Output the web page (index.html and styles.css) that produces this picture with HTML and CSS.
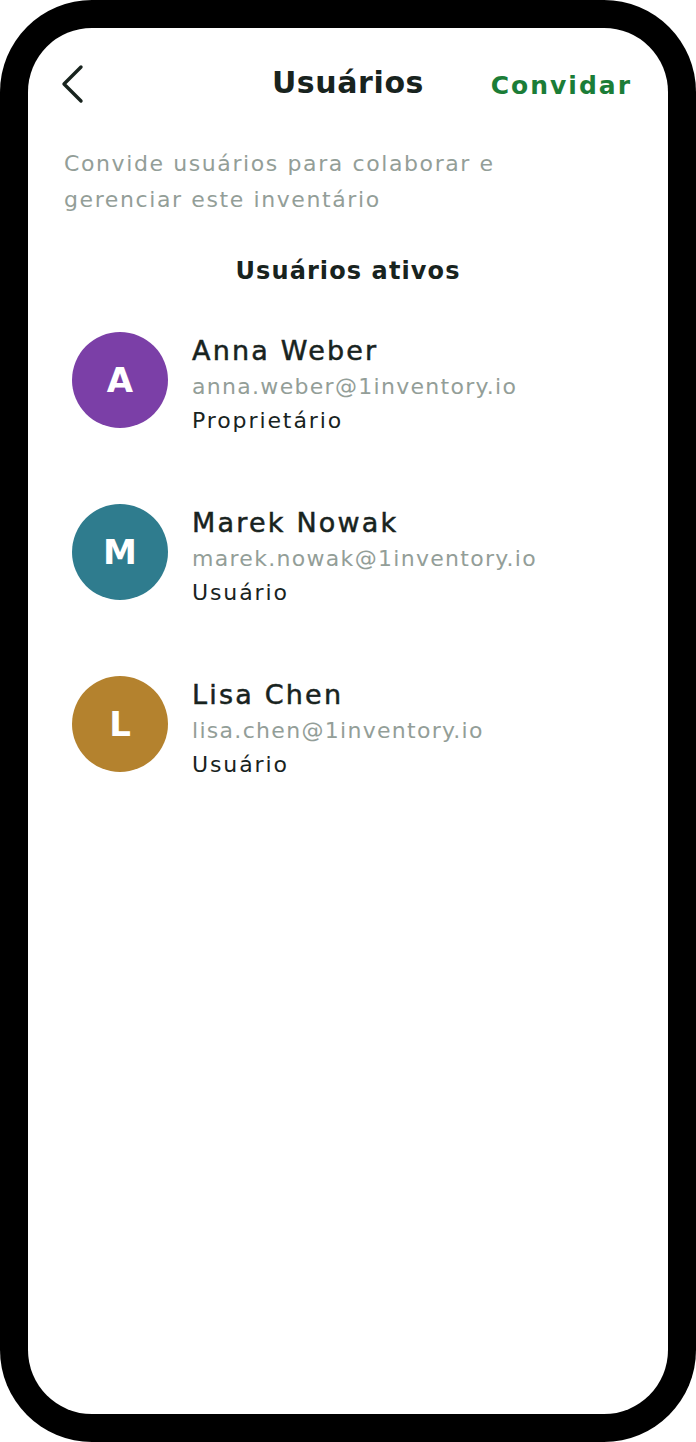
FILE: index.html
```html
<!DOCTYPE html>
<html lang="pt-BR">
<head>
<meta charset="utf-8">
<title>Usuários</title>
<link rel="stylesheet" href="styles.css">
</head>
<body>
<div class="phone">
  <div class="screen">
    <header class="topbar">
      <button class="back" aria-label="Voltar">
        <svg width="24" height="40" viewBox="0 0 24 40"><path d="M20 3 L3 20 L20 37" fill="none" stroke="#18231e" stroke-width="3.4" stroke-linecap="round" stroke-linejoin="round"/></svg>
      </button>
      <h1 class="title">Usuários</h1>
      <a class="invite">Convidar</a>
    </header>
    <p class="intro">Convide usuários para colaborar e gerenciar este inventário</p>
    <h2 class="section">Usuários ativos</h2>
    <ul class="users">
      <li class="user">
        <div class="avatar purple">A</div>
        <div class="info">
          <div class="name">Anna Weber</div>
          <div class="email">anna.weber@1inventory.io</div>
          <div class="role">Proprietário</div>
        </div>
      </li>
      <li class="user">
        <div class="avatar teal">M</div>
        <div class="info">
          <div class="name">Marek Nowak</div>
          <div class="email">marek.nowak@1inventory.io</div>
          <div class="role">Usuário</div>
        </div>
      </li>
      <li class="user">
        <div class="avatar gold">L</div>
        <div class="info">
          <div class="name">Lisa Chen</div>
          <div class="email">lisa.chen@1inventory.io</div>
          <div class="role">Usuário</div>
        </div>
      </li>
    </ul>
  </div>
</div>
</body>
</html>
```
FILE: styles.css
```css
* { box-sizing: border-box; }
html, body { margin: 0; padding: 0; background: #fff; }
body { font-family: "DejaVu Sans", "Open Sans", sans-serif; color: #18231e; }

.phone {
  width: 696px;
  height: 1442px;
  background: #000;
  border-radius: 92px;
  padding: 28px;
}
.screen {
  height: 100%;
  background: #fff;
  border-radius: 64px;
  padding: 36px 36px 0 36px;
}

.topbar {
  position: relative;
  display: flex;
  align-items: center;
  justify-content: space-between;
  height: 40px;
}
.back {
  border: 0;
  background: none;
  padding: 0;
  margin-left: -3px;
  width: 24px;
  height: 40px;
  display: flex;
}
.title {
  position: absolute;
  left: 0; right: 0;
  top: -1px;
  margin: 0;
  text-align: center;
  font-size: 30px;
  line-height: 40px;
  font-weight: 700;
  letter-spacing: 0.6px;
  pointer-events: none;
}
.invite {
  color: #1b7d37;
  font-weight: 700;
  font-size: 25px;
  line-height: 40px;
  letter-spacing: 2px;
  margin-top: 4px;
  margin-right: 0;
}

.intro {
  margin: 42px 0 0;
  font-size: 22px;
  line-height: 36px;
  letter-spacing: 1.6px;
  color: #939e98;
  max-width: 470px;
}
.section {
  margin: 36px 0 0;
  text-align: center;
  font-size: 24px;
  line-height: 34px;
  letter-spacing: 1.1px;
  font-weight: 700;
}

.users {
  list-style: none;
  margin: 44px 0 0;
  padding: 0 0 0 8px;
  display: flex;
  flex-direction: column;
  gap: 64px;
}
.user {
  display: flex;
  align-items: flex-start;
  gap: 24px;
}
.avatar {
  width: 96px;
  height: 96px;
  border-radius: 50%;
  color: #fff;
  font-weight: 700;
  font-size: 34px;
  display: flex;
  align-items: center;
  justify-content: center;
  flex: none;
}
.purple { background: #7b3fa7; }
.teal { background: #2f7c8e; }
.gold { background: #b4822e; }

.info { display: flex; flex-direction: column; margin-top: 0; padding-bottom: 2px; }
.name {
  font-size: 27px;
  line-height: 37px;
  letter-spacing: 2.2px;
  -webkit-text-stroke: 0.5px #18231e;
}
.email {
  font-size: 22px;
  line-height: 35px;
  letter-spacing: 1.3px;
  color: #939e98;
}
.role {
  font-size: 22px;
  line-height: 34px;
  letter-spacing: 1.9px;
}
```
